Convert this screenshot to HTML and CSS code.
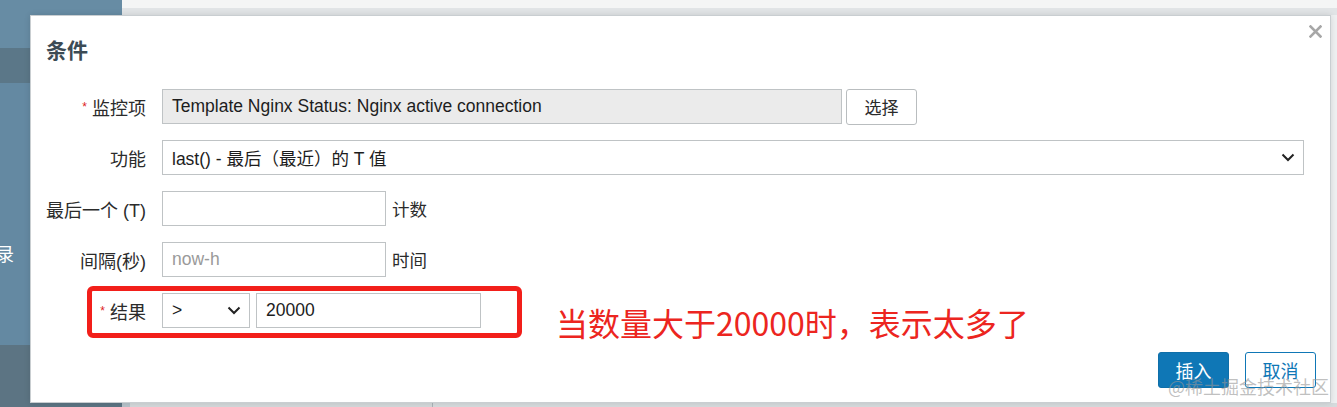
FILE: index.html
```html
<!DOCTYPE html>
<html lang="zh">
<head>
<meta charset="utf-8">
<title>条件</title>
<link rel="stylesheet" href="styles.css">
</head>
<body>
<div class="page">
  <aside class="sidebar">
    <div class="sb-top"></div>
    <div class="sb-band"></div>
    <div class="sb-mid"><span class="sb-item">录</span></div>
    <div class="sb-bottom"></div>
  </aside>
  <main class="main">
    <div class="topbar"></div>
    <div class="topstrip"></div>
    <div class="content"></div>
    <div class="footstrip"><div class="fs-a"></div><div class="fs-b"></div><div class="fs-c"></div></div>
  </main>

  <div class="dialog">
    <div class="dlg-head">
      <h2 class="dlg-title">条件</h2>
      <button class="dlg-close" aria-label="close">
        <svg width="13" height="13" viewBox="0 0 13 13"><path d="M1.5 1.5 L11.5 11.5 M11.5 1.5 L1.5 11.5" stroke="#a7a7a7" stroke-width="2.6" stroke-linecap="square"/></svg>
      </button>
    </div>
    <div class="form">
      <div class="label"><span class="req">*</span>监控项</div>
      <div class="ctrl">
        <div class="field readonly w680">Template Nginx Status: Nginx active connection</div>
        <button class="btn-alt">选择</button>
      </div>

      <div class="label">功能</div>
      <div class="ctrl">
        <div class="field select w1142"><span>last() - 最后（最近）的 T 值</span>
          <svg class="chev" width="14" height="9" viewBox="0 0 14 9"><path d="M1.5 1.5 L7 7 L12.5 1.5" fill="none" stroke="#222" stroke-width="2"/></svg>
        </div>
      </div>

      <div class="label">最后一个 (T)</div>
      <div class="ctrl">
        <div class="field w224"></div>
        <span class="suffix">计数</span>
      </div>

      <div class="label">间隔(秒)</div>
      <div class="ctrl">
        <div class="field w224 ph">now-h</div>
        <span class="suffix">时间</span>
      </div>

      <div class="label"><span class="req">*</span>结果</div>
      <div class="ctrl">
        <div class="field select w88"><span>&gt;</span>
          <svg class="chev" width="14" height="9" viewBox="0 0 14 9"><path d="M1.5 1.5 L7 7 L12.5 1.5" fill="none" stroke="#222" stroke-width="2"/></svg>
        </div>
        <div class="field w225">20000</div>
      </div>
    </div>
    <div class="dlg-foot">
      <button class="btn-primary">插入</button>
      <button class="btn-outline">取消</button>
    </div>
    <div class="highlight"></div>
    <div class="annotation">当数量大于20000时，表示太多了</div>
    <div class="watermark">@稀土掘金技术社区</div>
  </div>
</div>
</body>
</html>
```

FILE: styles.css
```css
* { box-sizing: border-box; }
html, body { margin: 0; padding: 0; }
body {
  width: 1337px;
  height: 407px;
  overflow: hidden;
  font-family: "Liberation Sans", "Noto Sans CJK SC", sans-serif;
  background: #e9ecee;
}
.page {
  position: relative;
  width: 1337px;
  height: 407px;
  display: grid;
  grid-template-columns: 122px 1fr;
}
.sidebar {
  display: flex;
  flex-direction: column;
  background: #6489a2;
}
.sb-top { height: 48px; background: #678ca4; }
.sb-band { height: 35px; background: #5b7788; }
.sb-mid {
  flex: 1;
  background: #6489a2;
  padding-top: 158px;
}
.sb-item {
  display: block;
  margin-left: -4px;
  color: #ffffff;
  font-size: 18px;
  font-family: "Noto Sans CJK SC", sans-serif;
  line-height: 24px;
}
.sb-bottom { height: 62px; background: #5c7483; }

.main { display: flex; flex-direction: column; }
.topbar { height: 8px; background: #f4f5f5; }
.topstrip { height: 7px; background: #e1e4e6; }
.content { flex: 1; background: #eef0f1; }
.footstrip { height: 4px; display: flex; }
.fs-a { width: 8px; background: #b6c2c9; }
.fs-b { width: 303px; background: #d3d8da; border-right: 1px solid #aab3b8; }
.fs-c { flex: 1; background: #d6dbdd; }

.dialog {
  position: absolute;
  left: 30px;
  top: 15px;
  width: 1301px;
  height: 388px;
  background: #ffffff;
  border: 1px solid #c9ced1;
  box-shadow: 0 0 6px rgba(0,0,0,0.12);
  padding: 0 14px 0 15px;
}
.dlg-head {
  height: 73px;
  display: flex;
  align-items: flex-start;
  justify-content: space-between;
}
.dlg-title {
  margin: 20px 0 0 0;
  font-size: 21px;
  line-height: 26px;
  font-weight: bold;
  color: #3c4b55;
  font-family: "Noto Sans CJK SC", sans-serif;
}
.dlg-close {
  margin: 9px -6px 0 0;
  padding: 0;
  border: 0;
  background: none;
  width: 13px;
  height: 13px;
  display: flex;
}
.form {
  display: grid;
  grid-template-columns: 100px 1fr;
  column-gap: 16px;
  row-gap: 16px;
  align-items: center;
}
.label {
  text-align: right;
  font-size: 18px;
  color: #2b2b2b;
  font-family: "Liberation Sans", "Noto Sans CJK SC", sans-serif;
  white-space: nowrap;
}
.req {
  color: #d22;
  font-size: 12px;
  vertical-align: 4px;
  margin-right: 5px;
}
.ctrl {
  display: flex;
  align-items: center;
  height: 35px;
}
.field {
  height: 35px;
  border: 1px solid #bfc3c5;
  background: #fff;
  padding: 0 9px;
  display: flex;
  align-items: center;
  font-size: 17.5px;
  color: #1d1d1d;
  white-space: nowrap;
}
.readonly { background: #ebebeb; }
.ph { color: #9a9a9a; }
.select { justify-content: space-between; padding-right: 8px; }
.chev { flex: none; }
.w680 { width: 680px; }
.w1142 { width: 1142px; }
.w224 { width: 224px; }
.w88 { width: 88px; }
.w225 { width: 225px; margin-left: 6px; }
.btn-alt {
  margin-left: 4px;
  width: 71px;
  height: 36px;
  border: 1px solid #b9bdbf;
  border-radius: 3px;
  background: #fff;
  font-size: 17px;
  color: #2b2b2b;
  font-family: "Noto Sans CJK SC", sans-serif;
  padding: 0;
}
.suffix {
  margin-left: 6px;
  font-size: 17.5px;
  color: #2b2b2b;
  font-family: "Noto Sans CJK SC", sans-serif;
}
.dlg-foot {
  margin-top: 24px;
  display: flex;
  justify-content: flex-end;
  gap: 16px;
}
.btn-primary, .btn-outline {
  width: 71px;
  height: 36px;
  border-radius: 3px;
  font-size: 18px;
  font-family: "Noto Sans CJK SC", sans-serif;
  padding: 0;
}
.btn-primary {
  background: #0f77b6;
  border: 1px solid #0f6fa9;
  color: #fff;
}
.btn-outline {
  background: #fff;
  border: 1px solid #0f77b6;
  color: #0f77b6;
}
.highlight {
  position: absolute;
  left: 56px;
  top: 270px;
  width: 435px;
  height: 52px;
  border: 5px solid #f21f1a;
  border-radius: 6px;
}
.annotation {
  position: absolute;
  left: 525px;
  top: 285px;
  font-size: 32px;
  line-height: 42px;
  color: #ec2520;
  font-family: "Noto Sans CJK SC", sans-serif;
  white-space: nowrap;
}
.watermark {
  position: absolute;
  left: 1137px;
  top: 358px;
  font-size: 18px;
  line-height: 24px;
  color: rgba(150,150,150,0.6);
  font-family: "Noto Sans CJK SC", sans-serif;
  white-space: nowrap;
}
```
